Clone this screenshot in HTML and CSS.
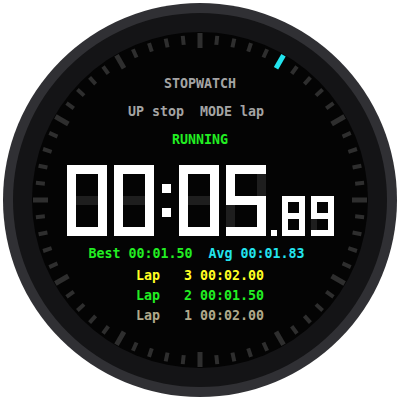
FILE: index.html
```html
<!DOCTYPE html>
<html lang="en">
<head>
<meta charset="utf-8">
<title>Stopwatch</title>
<link rel="stylesheet" href="styles.css">
</head>
<body>
<div class="stage">
  <div class="bezel">
    <div class="ring">
      <div class="face">
        <svg class="ticks" viewBox="0 0 336 336" width="336" height="336" aria-hidden="true">
          <defs>
            <line id="mj" x1="168" y1="1" x2="168" y2="16" stroke-width="5"/>
            <line id="mn" x1="168" y1="3" x2="168" y2="12" stroke-width="4"/>
          </defs>
          <g stroke="#2e2e2e">
            <use href="#mj"/>
            <use href="#mn" transform="rotate(6 168 168)"/>
            <use href="#mn" transform="rotate(12 168 168)"/>
            <use href="#mn" transform="rotate(18 168 168)"/>
            <use href="#mn" transform="rotate(24 168 168)"/>
            <use href="#mn" transform="rotate(36 168 168)"/>
            <use href="#mn" transform="rotate(42 168 168)"/>
            <use href="#mn" transform="rotate(48 168 168)"/>
            <use href="#mn" transform="rotate(54 168 168)"/>
            <use href="#mj" transform="rotate(60 168 168)"/>
            <use href="#mn" transform="rotate(66 168 168)"/>
            <use href="#mn" transform="rotate(72 168 168)"/>
            <use href="#mn" transform="rotate(78 168 168)"/>
            <use href="#mn" transform="rotate(84 168 168)"/>
            <use href="#mj" transform="rotate(90 168 168)"/>
            <use href="#mn" transform="rotate(96 168 168)"/>
            <use href="#mn" transform="rotate(102 168 168)"/>
            <use href="#mn" transform="rotate(108 168 168)"/>
            <use href="#mn" transform="rotate(114 168 168)"/>
            <use href="#mj" transform="rotate(120 168 168)"/>
            <use href="#mn" transform="rotate(126 168 168)"/>
            <use href="#mn" transform="rotate(132 168 168)"/>
            <use href="#mn" transform="rotate(138 168 168)"/>
            <use href="#mn" transform="rotate(144 168 168)"/>
            <use href="#mj" transform="rotate(150 168 168)"/>
            <use href="#mn" transform="rotate(156 168 168)"/>
            <use href="#mn" transform="rotate(162 168 168)"/>
            <use href="#mn" transform="rotate(168 168 168)"/>
            <use href="#mn" transform="rotate(174 168 168)"/>
            <use href="#mj" transform="rotate(180 168 168)"/>
            <use href="#mn" transform="rotate(186 168 168)"/>
            <use href="#mn" transform="rotate(192 168 168)"/>
            <use href="#mn" transform="rotate(198 168 168)"/>
            <use href="#mn" transform="rotate(204 168 168)"/>
            <use href="#mj" transform="rotate(210 168 168)"/>
            <use href="#mn" transform="rotate(216 168 168)"/>
            <use href="#mn" transform="rotate(222 168 168)"/>
            <use href="#mn" transform="rotate(228 168 168)"/>
            <use href="#mn" transform="rotate(234 168 168)"/>
            <use href="#mj" transform="rotate(240 168 168)"/>
            <use href="#mn" transform="rotate(246 168 168)"/>
            <use href="#mn" transform="rotate(252 168 168)"/>
            <use href="#mn" transform="rotate(258 168 168)"/>
            <use href="#mn" transform="rotate(264 168 168)"/>
            <use href="#mj" transform="rotate(270 168 168)"/>
            <use href="#mn" transform="rotate(276 168 168)"/>
            <use href="#mn" transform="rotate(282 168 168)"/>
            <use href="#mn" transform="rotate(288 168 168)"/>
            <use href="#mn" transform="rotate(294 168 168)"/>
            <use href="#mj" transform="rotate(300 168 168)"/>
            <use href="#mn" transform="rotate(306 168 168)"/>
            <use href="#mn" transform="rotate(312 168 168)"/>
            <use href="#mn" transform="rotate(318 168 168)"/>
            <use href="#mn" transform="rotate(324 168 168)"/>
            <use href="#mj" transform="rotate(330 168 168)"/>
            <use href="#mn" transform="rotate(336 168 168)"/>
            <use href="#mn" transform="rotate(342 168 168)"/>
            <use href="#mn" transform="rotate(348 168 168)"/>
            <use href="#mn" transform="rotate(354 168 168)"/>
          </g>
          <use href="#mj" stroke="#22e4ee" transform="rotate(30 168 168)"/>
        </svg>

        <div class="line title">STOPWATCH</div>
        <div class="line hint">UP stop  MODE lap</div>
        <div class="line state">RUNNING</div>

        <div class="clock" role="img" aria-label="00:05.89">
          <div class="dg big">
            <i class="on"></i><i class="on"></i><i class="on"></i>
            <i class="on"></i><i></i><i class="on"></i>
            <i class="on"></i><i class="off"></i><i class="on"></i>
            <i class="on"></i><i></i><i class="on"></i>
            <i class="on"></i><i class="on"></i><i class="on"></i>
          </div>
          <div class="dg big">
            <i class="on"></i><i class="on"></i><i class="on"></i>
            <i class="on"></i><i></i><i class="on"></i>
            <i class="on"></i><i class="off"></i><i class="on"></i>
            <i class="on"></i><i></i><i class="on"></i>
            <i class="on"></i><i class="on"></i><i class="on"></i>
          </div>
          <div class="colon"><b></b><b></b></div>
          <div class="dg big">
            <i class="on"></i><i class="on"></i><i class="on"></i>
            <i class="on"></i><i></i><i class="on"></i>
            <i class="on"></i><i class="off"></i><i class="on"></i>
            <i class="on"></i><i></i><i class="on"></i>
            <i class="on"></i><i class="on"></i><i class="on"></i>
          </div>
          <div class="dg big">
            <i class="on"></i><i class="on"></i><i class="on"></i>
            <i class="on"></i><i></i><i class="off"></i>
            <i class="on"></i><i class="on"></i><i class="on"></i>
            <i class="off"></i><i></i><i class="on"></i>
            <i class="on"></i><i class="on"></i><i class="on"></i>
          </div>
          <div class="dot"></div>
          <div class="dg small">
            <i class="on"></i><i class="on"></i><i class="on"></i>
            <i class="on"></i><i></i><i class="on"></i>
            <i class="on"></i><i class="on"></i><i class="on"></i>
            <i class="on"></i><i></i><i class="on"></i>
            <i class="on"></i><i class="on"></i><i class="on"></i>
          </div>
          <div class="dg small last">
            <i class="on"></i><i class="on"></i><i class="on"></i>
            <i class="on"></i><i></i><i class="on"></i>
            <i class="on"></i><i class="on"></i><i class="on"></i>
            <i class="off"></i><i></i><i class="on"></i>
            <i class="on"></i><i class="on"></i><i class="on"></i>
          </div>
        </div>

        <div class="line stats"><span class="best">Best 00:01.50</span>  <span class="avg">Avg 00:01.83</span></div>
        <div class="laps">
          <div class="line lap l3">Lap   3 00:02.00</div>
          <div class="line lap l2">Lap   2 00:01.50</div>
          <div class="line lap l1">Lap   1 00:02.00</div>
        </div>
      </div>
    </div>
  </div>
</div>
</body>
</html>
```

FILE: styles.css
```css
html, body {
  margin: 0;
  padding: 0;
  background: #ffffff;
}

.stage {
  width: 400px;
  height: 400px;
  display: flex;
  align-items: center;
  justify-content: center;
}

.bezel {
  width: 394px;
  height: 394px;
  border-radius: 50%;
  background: #303034;
  display: flex;
  align-items: center;
  justify-content: center;
}

.ring {
  width: 374px;
  height: 374px;
  border-radius: 50%;
  background: #141416;
  display: flex;
  align-items: center;
  justify-content: center;
}

.face {
  position: relative;
  width: 336px;
  height: 336px;
  box-sizing: border-box;
  border-radius: 50%;
  background: #040404;
  display: flex;
  flex-direction: column;
  align-items: center;
  padding-top: 42px;
}

.ticks {
  position: absolute;
  left: 0;
  top: 0;
}

.line {
  position: relative;
  font-family: "DejaVu Sans Mono", "Liberation Mono", monospace;
  font-weight: bold;
  font-size: 13.3px;
  line-height: 20px;
  height: 20px;
  white-space: pre;
}

.title {
  color: #a4a4a4;
}

.hint {
  color: #a4a4a4;
  margin-top: 8px;
  margin-right: 8px;
}

.state {
  color: #22ee22;
  margin-top: 8px;
}

.clock {
  display: flex;
  align-items: flex-end;
  margin-top: 15px;
  height: 71px;
}

.dg {
  display: grid;
}

.dg i {
  display: block;
}

.dg i.on {
  background: #ffffff;
}

.dg i.off {
  background: #1e1e1e;
}

.big {
  grid-template-columns: 9px 22px 9px;
  grid-template-rows: 9px 22px 9px 22px 9px;
  margin-right: 7px;
}

.small {
  grid-template-columns: 6px 11px 6px;
  grid-template-rows: 6px 11px 6px 11px 6px;
  margin-right: 6px;
}

.small.last {
  margin-right: 0;
}

.colon {
  display: flex;
  flex-direction: column;
  gap: 15px;
  height: 71px;
  box-sizing: border-box;
  padding-top: 19px;
  margin: 0 8px 0 1px;
}

.colon b {
  display: block;
  width: 9px;
  height: 9px;
  background: #ffffff;
}

.dot {
  width: 6px;
  height: 6px;
  background: #ffffff;
  margin: 0 5px 0 -2px;
}

.stats {
  margin-top: 8px;
  margin-right: 7px;
}

.best {
  color: #22ee22;
}

.avg {
  color: #22e4ee;
}

.laps {
  margin-top: 2px;
  display: flex;
  flex-direction: column;
  align-items: center;
}

.l3 {
  color: #ffff22;
}

.l2 {
  color: #22ee22;
}

.l1 {
  color: #b0a98b;
}
```
